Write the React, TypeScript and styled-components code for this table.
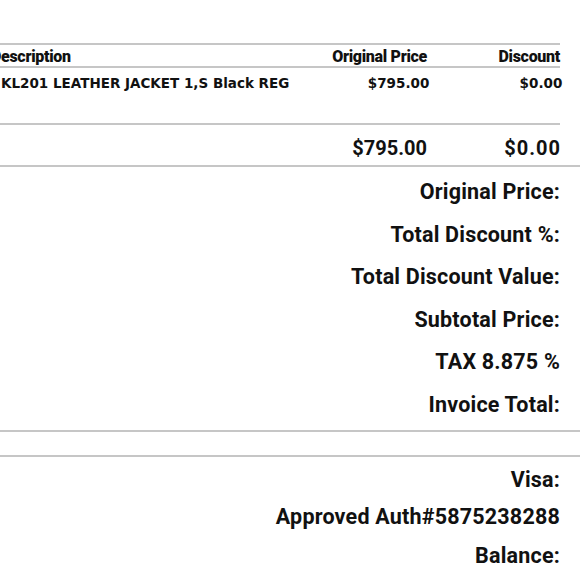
import React from "react";
import styled, { createGlobalStyle } from "styled-components";

const Global = createGlobalStyle`
  html, body { margin: 0; padding: 0; background: #ffffff; }
  body { width: 580px; height: 580px; overflow: hidden; }
`;

const Page = styled.div`
  width: 580px;
  height: 580px;
  overflow: hidden;
  background: #fff;
  color: #111;
  padding-top: 43px;
  box-sizing: border-box;
`;

const Table = styled.div`
  margin-left: -9px;
  padding-right: 20px;
`;

const Row = styled.div<{ $h: number }>`
  display: grid;
  grid-template-columns: 1fr 140px 133px;
  align-items: start;
  height: ${(p) => p.$h}px;
  border-top: 2px solid #c6c6c6;
  box-sizing: border-box;
`;

const HeadCell = styled.div<{ $right?: boolean }>`
  font-family: Roboto, "Liberation Sans", sans-serif;
  font-weight: 900;
  font-size: 16px;
  letter-spacing: -0.3px;
  line-height: 23px;
  white-space: nowrap;
  text-align: ${(p) => (p.$right ? "right" : "left")};
`;

const Cell = styled.div<{ $right?: boolean; $pad?: number }>`
  font-family: "DejaVu Sans", "Liberation Sans", sans-serif;
  font-weight: 700;
  font-size: 13.5px;
  line-height: 18px;
  padding-top: 6px;
  white-space: nowrap;
  padding-left: ${(p) => p.$pad ?? 0}px;
  text-align: ${(p) => (p.$right ? "right" : "left")};
`;

const TotalCell = styled.div<{ $wide?: boolean }>`
  font-family: Roboto, "Liberation Sans", sans-serif;
  font-weight: 700;
  font-size: 20px;
  letter-spacing: ${(p) => (p.$wide ? "1px" : "0")};
  margin-right: ${(p) => (p.$wide ? "-1px" : "0")};
  line-height: 24px;
  padding-top: 11px;
  text-align: right;
`;

const Summary = styled.div`
  border-top: 2px solid #c6c6c6;
  display: flex;
  flex-direction: column;
  align-items: flex-end;
  padding: 4px 20px 3px 0;
`;

const Label = styled.div<{ $h: number }>`
  font-family: Roboto, "Liberation Sans", sans-serif;
  font-weight: 700;
  font-size: 21.5px;
  letter-spacing: 0.2px;
  height: ${(p) => p.$h}px;
  line-height: ${(p) => p.$h}px;
  white-space: nowrap;
`;

const Spacer = styled.div`
  border-top: 2px solid #c6c6c6;
  height: 23px;
`;

const Payment = styled(Summary)`
  padding-top: 5px;
`;

const summary = [
  "Original Price:",
  "Total Discount %:",
  "Total Discount Value:",
  "Subtotal Price:",
  "TAX 8.875 %",
  "Invoice Total:",
];

export default function App() {
  return (
    <>
      <Global />
      <Page>
        <Table>
          <Row $h={23}>
            <HeadCell>Description</HeadCell>
            <HeadCell $right>Original Price</HeadCell>
            <HeadCell $right>Discount</HeadCell>
          </Row>
          <Row $h={57}>
            <Cell $pad={10}>KL201 LEATHER JACKET 1,S Black REG</Cell>
            <Cell $right>$795.00</Cell>
            <Cell $right>$0.00</Cell>
          </Row>
          <Row $h={42}>
            <TotalCell />
            <TotalCell>$795.00</TotalCell>
            <TotalCell $wide>$0.00</TotalCell>
          </Row>
        </Table>
        <Summary>
          {summary.map((s) => (
            <Label key={s} $h={42.6}>
              {s}
            </Label>
          ))}
        </Summary>
        <Spacer />
        <Payment>
          <Label $h={36}>Visa:</Label>
          <Label $h={38}>Approved Auth#5875238288</Label>
          <Label $h={40}>Balance:</Label>
        </Payment>
      </Page>
    </>
  );
}
